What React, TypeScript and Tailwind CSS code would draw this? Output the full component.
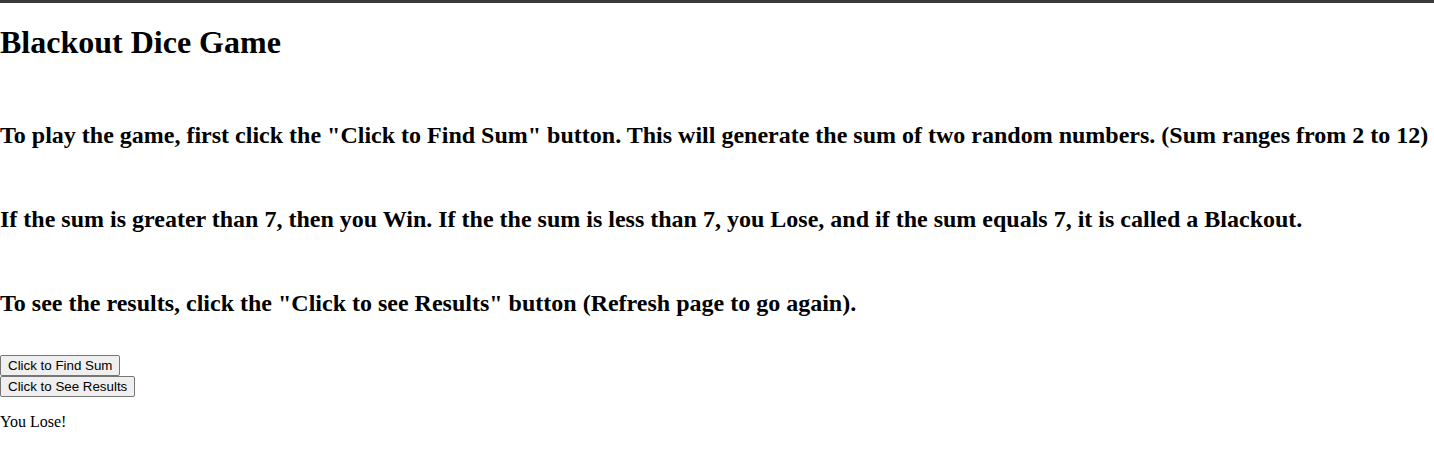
export default function App() {
  return (
    <div className="min-h-[461px] bg-white border-t-[3px] border-[#3a3a3a] text-black" style={{ fontFamily: '"Liberation Serif", serif' }}>
      <h1 className="mt-[21px] text-[32px] leading-[37px] font-bold">Blackout Dice Game</h1>
      <h2 className="mt-[60px] text-[24px] leading-[28px] font-bold whitespace-nowrap">
        To play the game, first click the "Click to Find Sum" button. This will generate the sum of two random numbers. (Sum ranges from 2 to 12)
      </h2>
      <h2 className="mt-[56px] text-[24px] leading-[28px] font-bold">
        If the sum is greater than 7, then you Win. If the the sum is less than 7, you Lose, and if the sum equals 7, it is called a Blackout.
      </h2>
      <h2 className="mt-[56px] text-[24px] leading-[28px] font-bold">
        To see the results, click the "Click to see Results" button (Refresh page to go again).
      </h2>
      <div className="mt-[38px] flex flex-col items-start" style={{ fontFamily: '"Liberation Sans", Arial, sans-serif' }}>
        <button className="h-[21px] px-[7px] text-[13.33px] leading-[16px] bg-[#efefef] border border-[#767676] rounded-[2px]">Click to Find Sum</button>
        <button className="h-[21px] px-[7px] text-[13.33px] leading-[16px] bg-[#efefef] border border-[#767676] rounded-[2px]">Click to See Results</button>
      </div>
      <p className="mt-[16px] text-[16px] leading-[18px]">You Lose!</p>
    </div>
  );
}
